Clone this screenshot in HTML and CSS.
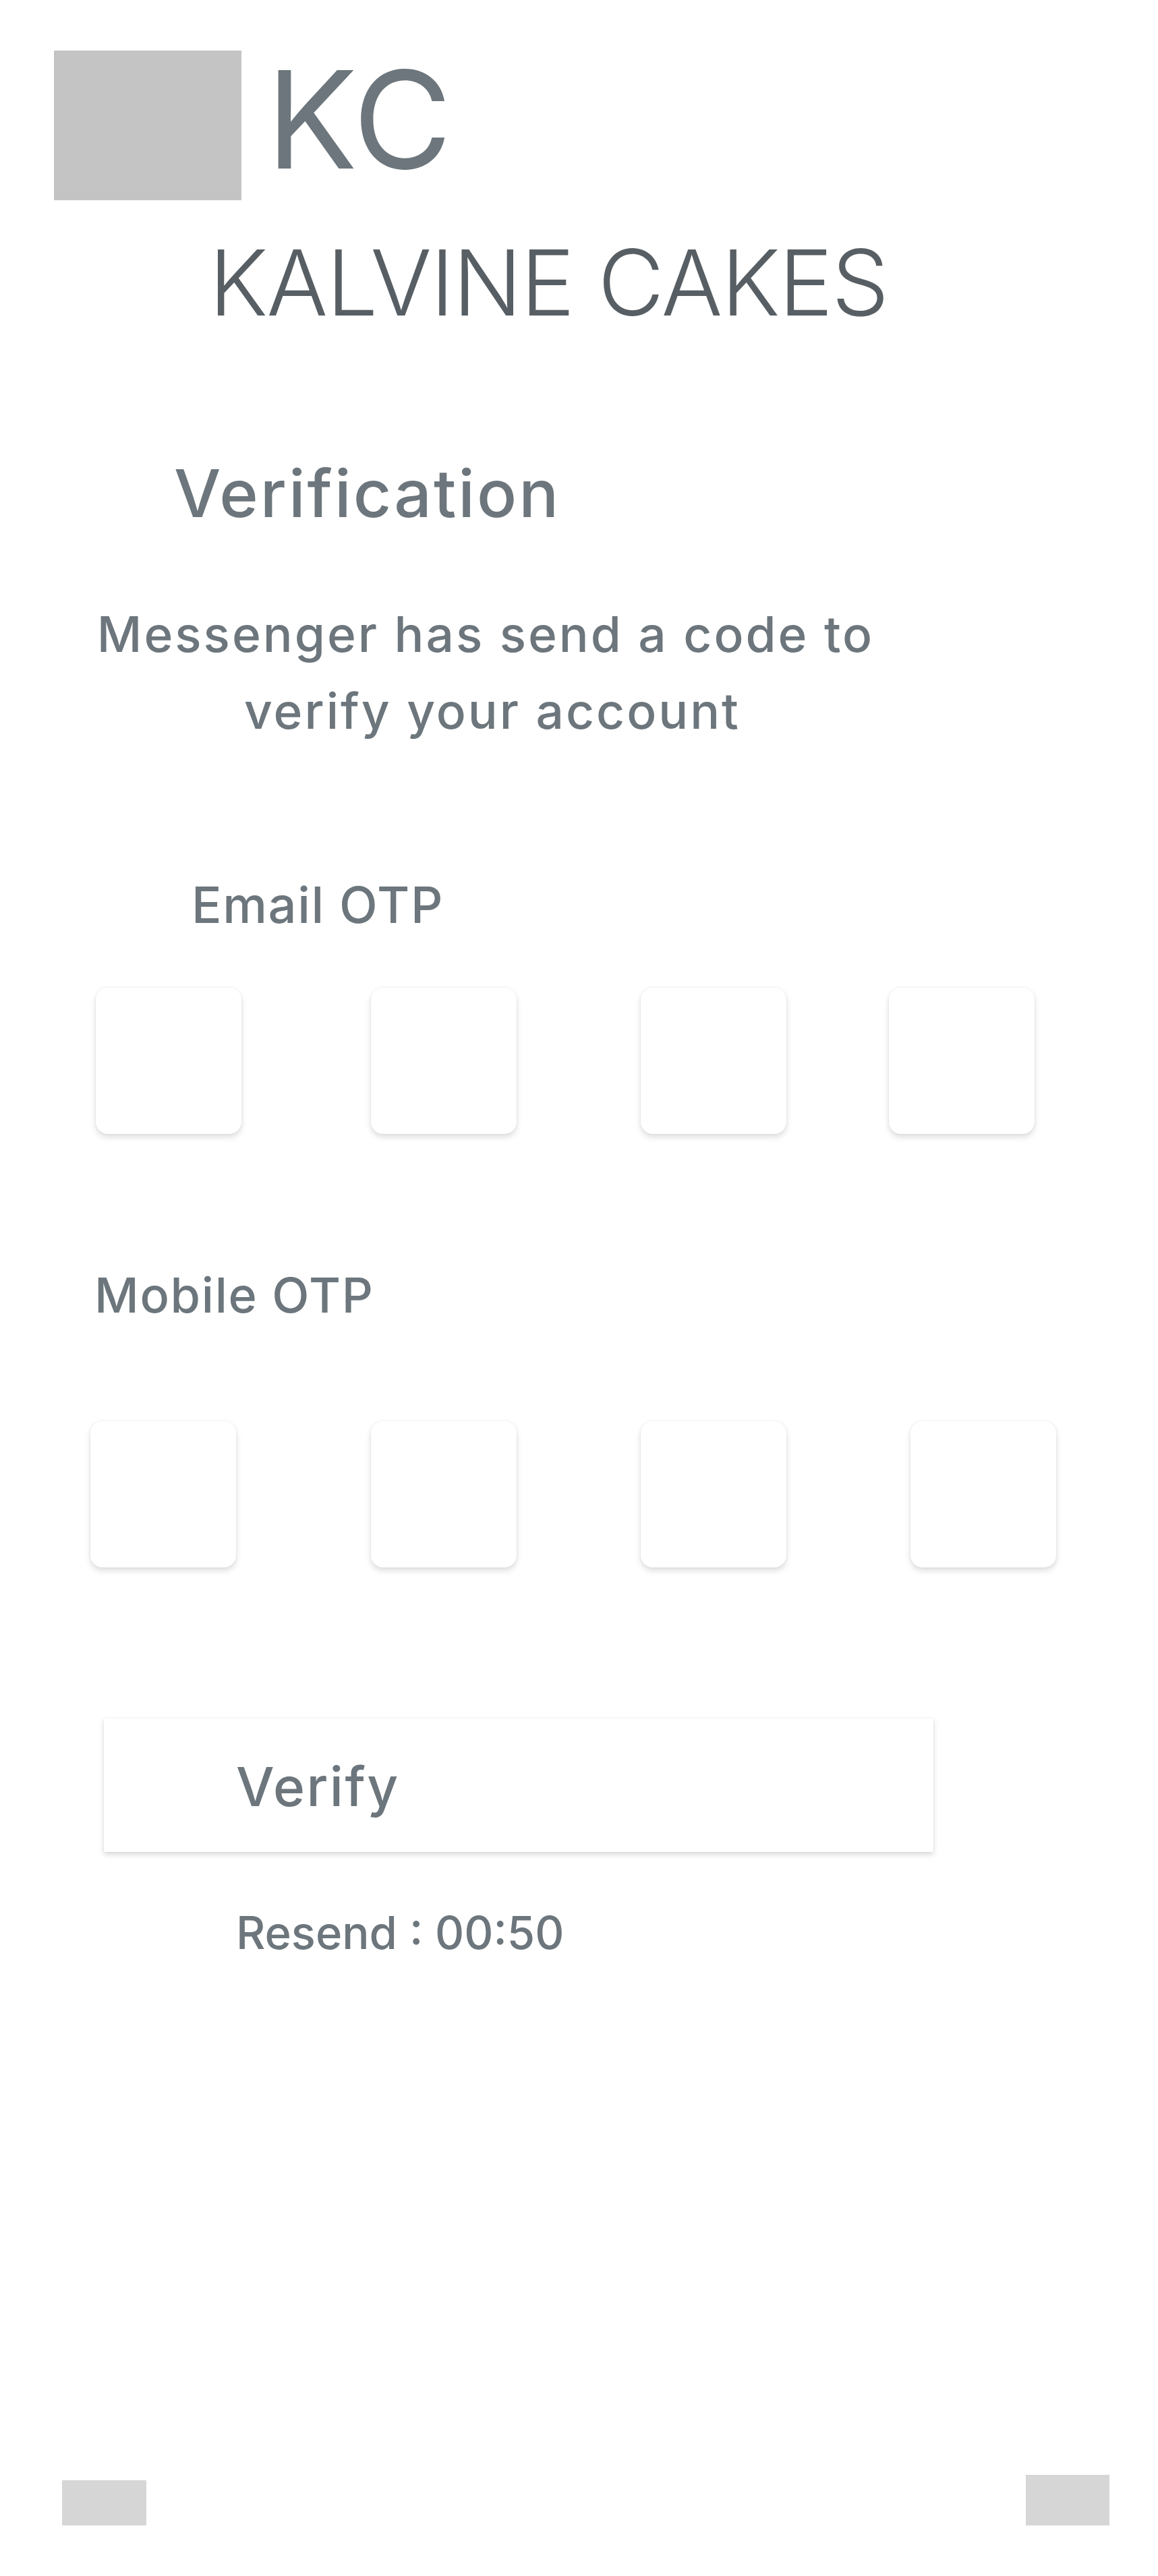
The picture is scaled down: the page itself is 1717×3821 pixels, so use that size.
FILE: index.html
```html
<!DOCTYPE html>
<html lang="en">
<head>
<meta charset="utf-8">
<title>Kalvine Cakes - Verification</title>
<link rel="stylesheet" href="styles.css">
</head>
<body>
<main class="page">
  <header class="brand">
    <div class="brand__logo"></div>
    <div class="brand__mark">KC</div>
  </header>
  <div class="brand__name">KALVINE CAKES</div>

  <h1 class="title">Verification</h1>
  <p class="lead">
    <span class="lead__line">Messenger has send a code to</span>
    <span class="lead__line lead__line--second">verify your account</span>
  </p>

  <div class="field-label field-label--email">Email OTP</div>
  <div class="otp-row otp-row--email">
    <div class="otp-box"></div>
    <div class="otp-box"></div>
    <div class="otp-box"></div>
    <div class="otp-box"></div>
  </div>

  <div class="field-label field-label--mobile">Mobile OTP</div>
  <div class="otp-row otp-row--mobile">
    <div class="otp-box"></div>
    <div class="otp-box"></div>
    <div class="otp-box"></div>
    <div class="otp-box"></div>
  </div>

  <button class="verify-btn" type="button">Verify</button>
  <div class="resend">Resend : 00:50</div>

  <footer class="bottom-bar">
    <div class="bottom-bar__left"></div>
    <div class="bottom-bar__right"></div>
  </footer>
</main>
</body>
</html>
```
FILE: styles.css
```css
* { box-sizing: border-box; }

html, body {
  margin: 0;
  padding: 0;
  background: #ffffff;
}

body {
  font-family: "Inter", "Noto Sans", sans-serif;
  color: #6c767c;
}

.page {
  display: flex;
  flex-direction: column;
  min-height: 3821px;
}

/* Header */
.brand {
  display: flex;
  align-items: flex-start;
  padding: 75px 0 0 80px;
}

.brand__logo {
  width: 278px;
  height: 222px;
  background: #c4c4c4;
  flex: none;
}

.brand__mark {
  font-size: 201px;
  line-height: 1;
  font-weight: 400;
  margin-left: 37px;
  margin-top: 1px;
  color: #6c767c;
}

.brand__name {
  margin-top: 55px;
  padding-left: 310px;
  font-size: 135px;
  line-height: 1;
  font-weight: 300;
  color: #585f64;
  letter-spacing: -2px;
}

/* Title */
.title {
  margin: 0;
  margin-top: 196px;
  padding-left: 258px;
  font-size: 98px;
  line-height: 1;
  font-weight: 500;
  color: #6c767c;
  letter-spacing: 3px;
}

.lead {
  margin: 0;
  margin-top: 103px;
  width: 1440px;
  text-align: center;
  font-size: 73px;
  line-height: 114px;
  font-weight: 500;
  color: #6c767c;
  letter-spacing: 3px;
}

.lead__line {
  display: block;
}

.lead__line--second {
  padding-left: 20px;
}

/* Labels */
.field-label {
  font-size: 74px;
  line-height: 1;
  font-weight: 500;
  color: #6c767c;
}

.field-label--email {
  margin-top: 193px;
  padding-left: 284px;
  letter-spacing: 1.6px;
}

.field-label--mobile {
  margin-top: 203px;
  padding-left: 140px;
  font-size: 72px;
  letter-spacing: 1.7px;
}

/* OTP boxes */
.otp-row {
  display: flex;
}

.otp-box {
  width: 216px;
  height: 217px;
  background: #ffffff;
  border-radius: 18px;
  box-shadow: 0 5px 10px rgba(0, 0, 0, 0.13), 0 0 4px rgba(0, 0, 0, 0.06);
  flex: none;
}

.otp-row--email {
  margin-top: 86px;
  padding-left: 142px;
}
.otp-row--email .otp-box:nth-child(2) { margin-left: 192px; }
.otp-row--email .otp-box:nth-child(3) { margin-left: 184px; }
.otp-row--email .otp-box:nth-child(4) { margin-left: 152px; }

.otp-row--mobile {
  margin-top: 151px;
  padding-left: 134px;
}
.otp-row--mobile .otp-box:nth-child(2) { margin-left: 200px; }
.otp-row--mobile .otp-box:nth-child(3) { margin-left: 184px; }
.otp-row--mobile .otp-box:nth-child(4) { margin-left: 184px; }

/* Verify button */
.verify-btn {
  display: block;
  margin: 224px 0 0 154px;
  width: 1230px;
  padding: 61px 0 57px 196px;
  border: none;
  border-radius: 0;
  background: #ffffff;
  box-shadow: 0 4px 8px rgba(0, 0, 0, 0.15), 0 0 3px rgba(0, 0, 0, 0.06);
  font-family: "Inter", "Noto Sans", sans-serif;
  font-size: 80px;
  line-height: 80px;
  font-weight: 500;
  color: #6c767c;
  text-align: left;
  letter-spacing: 2.5px;
}

.resend {
  margin-top: 86px;
  padding-left: 350px;
  font-size: 67px;
  line-height: 1;
  font-weight: 500;
  color: #6c767c;
}

/* Bottom bar */
.bottom-bar {
  margin-top: auto;
  display: flex;
  justify-content: space-between;
  align-items: flex-end;
  padding: 0 72px 75px 92px;
}

.bottom-bar__left {
  width: 125px;
  height: 67px;
  background: #d6d6d6;
}

.bottom-bar__right {
  width: 124px;
  height: 75px;
  background: #d6d6d6;
}
```
